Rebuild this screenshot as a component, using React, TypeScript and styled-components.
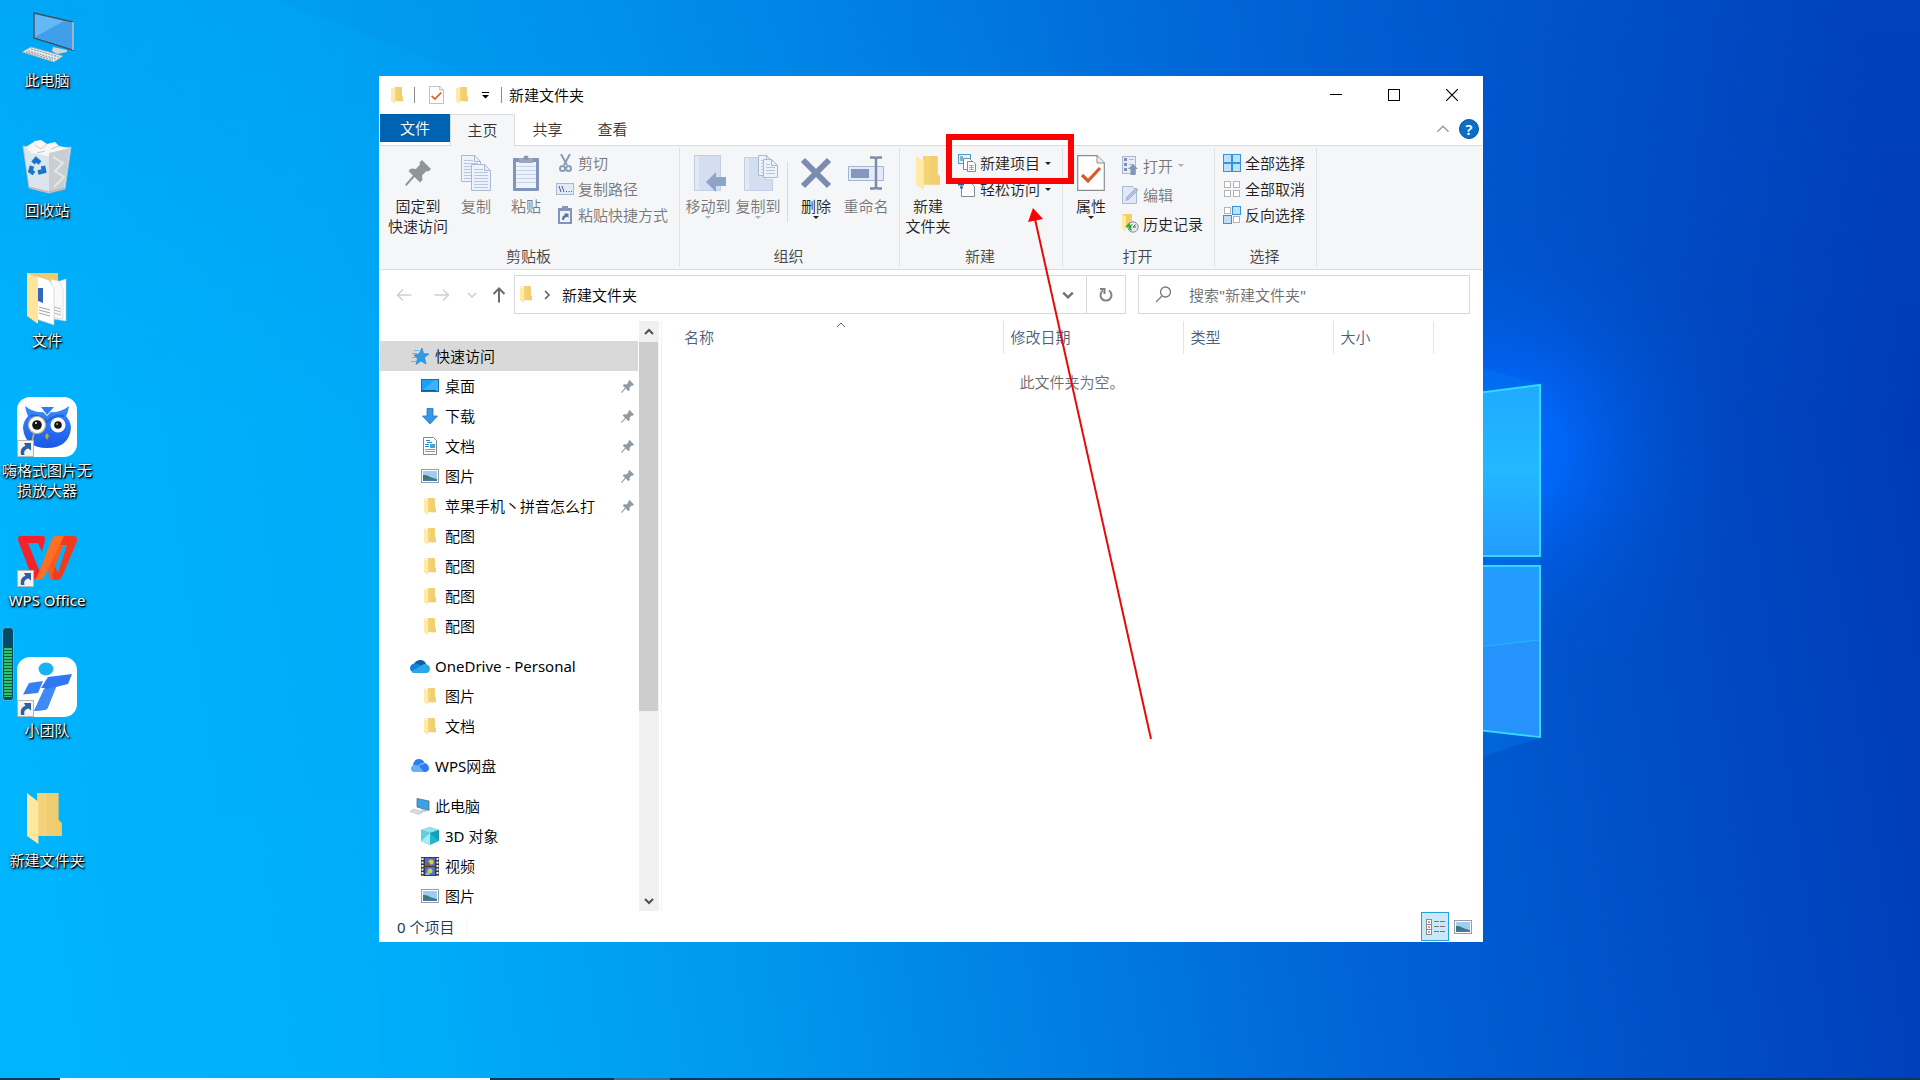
import React from "react";
import styled, { createGlobalStyle, css } from "styled-components";

const GlobalStyle = createGlobalStyle`
  *, *::before, *::after { box-sizing: border-box; }
  html, body { margin: 0; padding: 0; }
  body, button, input {
    font-family: "Noto Sans", "Noto Sans CJK SC DemiLight", "Noto Sans CJK SC", sans-serif;
    font-size: 15px;
    font-weight: 400;
    line-height: 20px;
  }
  button { margin: 0; padding: 0; border: 0; background: none; color: inherit; cursor: default; }
  svg { display: block; flex: none; }
`;

/* ---------- desktop ---------- */

const Desktop = styled.div`
  position: relative;
  display: flex;
  flex-direction: column;
  min-height: 100vh;
  overflow: hidden;
  background: #0078dc;
`;

const WallpaperSvg = styled.svg`
  position: absolute;
  inset: 0;
  width: 100%;
  height: 100%;
`;

const Workspace = styled.main`
  position: relative;
  display: flex;
  flex: 1;
`;

const IconColumn = styled.ul`
  display: flex;
  flex-direction: column;
  flex: none;
  width: 94px;
  margin: 0;
  padding: 7px 0 0;
  list-style: none;
`;

const DesktopItem = styled.li`
  height: 130px;
`;

const DesktopButton = styled.button`
  display: flex;
  flex-direction: column;
  align-items: center;
  gap: 3px;
  width: 100%;
  color: #fff;
  text-align: center;
  text-shadow: 1px 1px 1px #000, 1px 1px 2px #000, 0 1px 3px rgba(0, 0, 0, 0.8);
`;

const Battery = styled.div`
  position: absolute;
  left: 2px;
  top: 627px;
  width: 12px;
  height: 74px;
  padding: 20px 1px 3px;
  border: 1px solid #48b8e0;
  border-radius: 4px;
  background: #064a68;
`;

const BatteryCells = styled.div`
  height: 100%;
  background: repeating-linear-gradient(#2fc46a 0 2px, #07603c 2px 3px);
`;

const Taskbar = styled.footer`
  position: relative;
  display: flex;
  height: 2px;
  background: #0b3a52;
`;

const TaskbarPart = styled.div<{ $width: number; $color?: string }>`
  width: ${(p) => p.$width}px;
  background: ${(p) => p.$color ?? "transparent"};
`;

/* ---------- window ---------- */

const Window = styled.section`
  position: relative;
  display: flex;
  flex-direction: column;
  flex: 1;
  min-width: 960px;
  margin: 76px 437px 136px 285px;
  padding: 0 1px;
  background: #fff;
  color: #1a1a1a;
`;

const TitleBar = styled.header`
  display: flex;
  align-items: center;
  height: 38px;
  padding: 0 1px 0 11px;
  color: #000;
`;

const QuickButton = styled.button`
  display: flex;
  justify-content: center;
  width: 25px;
`;

const TitleIcon = styled.span`
  display: flex;
`;

const TitleRule = styled.span<{ $before: number; $after: number }>`
  width: 1px;
  height: 16px;
  margin: 0 ${(p) => p.$after}px 0 ${(p) => p.$before}px;
  background: #8c8c8c;
`;

const WindowTitle = styled.h1`
  flex: 1;
  margin: 0;
  font-size: 15px;
  font-weight: 400;
  line-height: 20px;
`;

const CaptionButton = styled.button`
  display: flex;
  align-items: center;
  justify-content: center;
  width: 58px;
  height: 38px;
`;

const TabBar = styled.nav`
  display: flex;
  height: 31px;
`;

const FileTab = styled.button`
  width: 70px;
  height: 28px;
  background: #0063b1;
  color: #fff;
`;

const Tab = styled.button<{ $active?: boolean }>`
  width: 65px;
  height: 32px;
  padding-bottom: 2px;
  color: #333;
  ${(p) =>
    p.$active &&
    css`
      border: 1px solid #dadbdc;
      border-bottom: 0;
      background: #f5f6f7;
      z-index: 1;
    `}
`;

const TabTools = styled.div`
  display: flex;
  align-items: center;
  gap: 9px;
  margin-left: auto;
  padding: 0 3px 2px 0;
`;

const HelpButton = styled.button`
  width: 20px;
  height: 20px;
  border-radius: 50%;
  border: 1px solid #08519c;
  background: #0a6fc8;
  color: #fff;
  font-weight: 600;
  line-height: 18px;
`;

const Ribbon = styled.div`
  display: flex;
  height: 125px;
  padding: 2px 0;
  border-top: 1px solid #dadbdc;
  border-bottom: 1px solid #dadbdc;
  background: #f5f6f7;
`;

const Group = styled.section<{ $width: number }>`
  display: flex;
  flex-direction: column;
  width: ${(p) => p.$width}px;
  border-right: 1px solid #e0e1e2;
`;

const GroupBody = styled.div`
  display: flex;
  flex: 1;
  padding-left: 3px;
`;

const GroupLabel = styled.h2`
  margin: 0;
  padding-right: 2px;
  color: #444;
  font-size: 15px;
  font-weight: 400;
  line-height: 22px;
  text-align: center;
`;

const GroupRule = styled.span`
  width: 1px;
  height: 60px;
  margin: 14px 3px 0 4px;
  background: #dadbdc;
`;

const BigButtonRoot = styled.button<{ $wide?: boolean }>`
  display: flex;
  flex-direction: column;
  align-items: center;
  width: ${(p) => (p.$wide ? 68 : 50)}px;
  padding: 7px 0 0 ${(p) => (p.$wide ? 2 : 0)}px;
  white-space: nowrap;
  color: #222;
  &:disabled { color: #777; }
`;

const BigIcon = styled.span`
  display: flex;
  align-items: center;
  justify-content: center;
  height: 36px;
  margin-bottom: 5px;
`;

const SmallList = styled.div<{ $loose?: boolean }>`
  display: grid;
  grid-auto-rows: ${(p) => (p.$loose ? 29 : 26)}px;
  align-content: start;
  margin-left: 4px;
  padding-top: ${(p) => (p.$loose ? 3 : 2)}px;
`;

const SmallButton = styled.button`
  display: flex;
  align-items: center;
  gap: 3px;
  white-space: nowrap;
  color: #222;
  &:disabled { color: #777; }
`;

const SmallIcon = styled.span`
  display: flex;
  justify-content: center;
  width: 20px;
`;

const ArrowRoot = styled.span<{ $muted?: boolean; $side?: boolean }>`
  width: 0;
  height: 0;
  margin-left: ${(p) => (p.$side ? 2 : 0)}px;
  border: 3px solid transparent;
  border-top-color: ${(p) => (p.$muted ? "#b0b0b0" : "#222")};
  border-bottom: 0;
`;

/* ---------- address row ---------- */

const AddressRow = styled.div`
  display: flex;
  align-items: center;
  padding: 5px 12px 7px 4px;
`;

const NavButton = styled.button<{ $width: number }>`
  display: flex;
  align-items: center;
  justify-content: center;
  width: ${(p) => p.$width}px;
  height: 38px;
`;

const AddressBox = styled.div`
  display: flex;
  align-items: center;
  flex: 1;
  height: 39px;
  padding-left: 5px;
  border: 1px solid #d9d9d9;
`;

const Crumb = styled.button`
  flex: 1;
  color: #000;
  text-align: left;
`;

const CrumbArrow = styled.span`
  display: flex;
  justify-content: center;
  width: 30px;
`;

const RefreshButton = styled.button`
  display: flex;
  align-items: center;
  justify-content: center;
  width: 39px;
  height: 37px;
  border-left: 1px solid #d9d9d9;
`;

const SearchBox = styled.label`
  display: flex;
  align-items: center;
  gap: 17px;
  width: 332px;
  height: 39px;
  margin-left: 12px;
  padding-left: 16px;
  border: 1px solid #d9d9d9;
`;

const SearchInput = styled.input`
  flex: 1;
  min-width: 0;
  padding: 0;
  border: 0;
  outline: 0;
  background: none;
  &::placeholder { color: #6d6d6d; opacity: 1; }
`;

/* ---------- panes ---------- */

const Panes = styled.div`
  display: flex;
  flex: 1;
`;

const Sidebar = styled.nav`
  display: flex;
  width: 282px;
  border-right: 1px solid #f2f2f2;
`;

const Tree = styled.div`
  display: flex;
  flex-direction: column;
  flex: 1;
  gap: 10px;
  padding-top: 20px;
  margin-right: 1px;
`;

const TreeSection = styled.div`
  display: flex;
  flex-direction: column;
`;

const TreeRow = styled.button<{ $child?: boolean; $selected?: boolean }>`
  display: flex;
  align-items: center;
  gap: 5px;
  height: 30px;
  padding: 0 4px 0 ${(p) => (p.$child ? 40 : 30)}px;
  background: ${(p) => (p.$selected ? "#d9d9d9" : "transparent")};
  color: #000;
  text-align: left;
`;

const TreeIcon = styled.span`
  display: flex;
  align-items: center;
  justify-content: center;
  width: 20px;
`;

const TreeLabel = styled.span`
  flex: 1;
  white-space: nowrap;
`;

const ScrollTrack = styled.div`
  display: flex;
  flex-direction: column;
  width: 20px;
  margin-right: 2px;
  background: #f0f0f0;
`;

const ScrollButton = styled.button`
  display: flex;
  align-items: center;
  justify-content: center;
  width: 19px;
  height: 21px;
`;

const ScrollSlot = styled.div`
  flex: 1;
`;

const ScrollThumb = styled.div`
  width: 19px;
  height: 67.4%;
  background: #cdcdcd;
`;

const FilePane = styled.div`
  position: relative;
  flex: 1;
`;

const FileTable = styled.table`
  width: 100%;
  border-collapse: collapse;
  table-layout: fixed;
`;

const HeadCell = styled.th<{ $width?: number; $inset?: number }>`
  width: ${(p) => (p.$width ? `${p.$width}px` : "auto")};
  height: 33px;
  padding: 0 0 2px ${(p) => p.$inset ?? 7}px;
  border-right: 1px solid #e5e5e5;
  color: #4c607a;
  font-weight: 400;
  text-align: left;
  &:last-child { border-right: 0; }
`;

const SortMark = styled.svg`
  position: absolute;
  left: 174px;
  top: 1px;
`;

const EmptyCell = styled.td`
  padding: 18px 0 0;
  color: #6d6d6d;
  text-align: center;
`;

const StatusBar = styled.footer`
  display: flex;
  align-items: center;
  height: 31px;
  padding: 0 5px 0 17px;
  color: #1e395b;
`;

const StatusText = styled.span`
  padding-right: 12px;
  border-right: 1px solid #f6f6f6;
`;

const ViewButtons = styled.div`
  display: flex;
  margin-left: auto;
`;

const ViewButton = styled.button<{ $active?: boolean }>`
  display: flex;
  align-items: center;
  justify-content: center;
  width: 28px;
  height: 29px;
  border: 1px solid ${(p) => (p.$active ? "#26a0da" : "transparent")};
  background: ${(p) => (p.$active ? "#cbe8f6" : "transparent")};
`;

/* ---------- annotation ---------- */

const Highlight = styled.div`
  position: absolute;
  left: 567px;
  top: 58px;
  width: 128px;
  height: 50px;
  border: 6px solid #f00;
  pointer-events: none;
`;

const Pointer = styled.svg`
  position: absolute;
  left: 640px;
  top: 130px;
  pointer-events: none;
`;

/* ---------- icons ---------- */

const Folder = ({ w = 12, h = 17 }: { w?: number; h?: number }) => (
  <svg width={w} height={h} viewBox="0 0 104 152" preserveAspectRatio="none">
    <path d="M0 0H94V80L104 90V128H30V0z" fill="#f5d478" />
    <path d="M60 0H94V80L104 90V128H60z" fill="#efc964" opacity=".5" />
    <path d="M0 0L34 26V152L0 128z" fill="#ffeaa6" />
  </svg>
);

const Pin = ({ size, color = "#8f9aa3" }: { size: number; color?: string }) => (
  <svg width={size} height={size} viewBox="0 0 26 26" fill={color}>
    <path d="M17 0L26 9L23.500 11.500L21.500 11L17 15.500L17.500 20L15 22.500L9.500 17L1.500 26L0 24.500L8 15.500L3.500 11L6 8.500L11 9L15 4.500L14.500 2.500z" />
  </svg>
);

const Sheet = ({ x, y, w, h }: { x: number; y: number; w: number; h: number }) => (
  <g>
    <path d={`M${x + 0.5} ${y + 0.5}h${w - 7}l6 6v${h - 7}h-${w - 1}z`} fill="#eef3fb" stroke="#a9b8d3" />
    <path d={`M${x + w - 6.5} ${y + 0.5}v6h6`} fill="none" stroke="#a9b8d3" />
    {[5, 8, 11, 14, 17, 20, 23].filter((d) => d < h - 2).map((d) => (
      <path key={d} d={`M${x + 3} ${y + d + 0.5}h${d < 8 ? w - 11 : w - 6}`} stroke="#b9c6de" />
    ))}
  </g>
);

const CopyIcon = () => (
  <svg width="31" height="36">
    <Sheet x={0} y={0} w={20} h={27} />
    <Sheet x={10} y={9} w={20} h={27} />
  </svg>
);

const PasteIcon = () => (
  <svg width="27" height="36">
    <rect x="0" y="3" width="26" height="33" rx="1" fill="#8194b9" />
    <rect x="3" y="7" width="20" height="26" fill="#edf2fb" />
    <path d="M3 11.500h20M3 15.500h20M3 19.500h20M3 23.500h20M3 27.500h20" stroke="#c6d2e8" />
    <rect x="6" y="3" width="14" height="5" fill="#9aa7bf" />
    <circle cx="13" cy="3" r="2.500" fill="#8a97b0" />
  </svg>
);

const CutIcon = () => (
  <svg width="13" height="19" fill="none" stroke="#8b9bb8">
    <path d="M2 0L8 11M11 0L5 11" strokeWidth="2" />
    <circle cx="3.500" cy="14.500" r="2.500" strokeWidth="2" />
    <circle cx="9.500" cy="14.500" r="2.500" strokeWidth="2" />
  </svg>
);

const PathIcon = () => (
  <svg width="18" height="12">
    <rect x=".5" y=".5" width="17" height="11" fill="#e3eaf7" stroke="#a9b8d3" />
    <path d="M3 3l2 6M6 3l2 6" stroke="#4a5c7c" />
    <path d="M10 8.500h1M12.500 8.500h1M15 8.500h1" stroke="#4a5c7c" />
  </svg>
);

const PasteLinkIcon = () => (
  <svg width="14" height="18">
    <rect x="0" y="2" width="14" height="16" fill="#8194b9" />
    <rect x="2" y="5" width="10" height="11" fill="#edf2fb" />
    <rect x="4" y="0" width="6" height="5" fill="#8a97b0" />
    <path d="M4 14C4 11 5 9.500 7 9L6 7.500H10.500V12L9.300 10.800C7 11.500 6 12.500 6 14z" fill="#5b73a3" />
  </svg>
);

const MoveIcon = () => (
  <svg width="36" height="37">
    <rect x="4.500" y=".5" width="26" height="35" fill="#d3dff1" stroke="#c0cfe6" />
    <rect x="5" y="1" width="4" height="34" fill="#e1e9f6" />
    <path d="M16 27L26 17V22H36V31H26V37z" fill="#8fa3c4" />
  </svg>
);

const CopyToIcon = () => (
  <svg width="40" height="37">
    <path d="M6.500 2.500h21v22h7v11H6.500z" fill="#d3dff1" stroke="#c0cfe6" />
    <rect x="7" y="3" width="4" height="32" fill="#e1e9f6" />
    <Sheet x={20} y={0} w={15} h={21} />
    <Sheet x={25} y={4} w={15} h={19} />
  </svg>
);

const DeleteIcon = () => (
  <svg width="32" height="32" stroke="#7b8cb0" strokeWidth="6">
    <path d="M3 3L29 29M29 3L3 29" />
  </svg>
);

const RenameIcon = () => (
  <svg width="36" height="36">
    <rect x=".5" y="11.500" width="35" height="14" fill="#e3ebf8" stroke="#a5b6d3" />
    <rect x="3" y="14" width="18" height="9" fill="#8498be" />
    <path d="M22 2.500H26Q28 2.500 28 5V31Q28 33.500 26 33.500H22M34 2.500H30Q28 2.500 28 5M28 31Q28 33.500 30 33.500H34" fill="none" stroke="#7f8ba3" strokeWidth="2.500" />
  </svg>
);

const NewItemIcon = () => (
  <svg width="18" height="18">
    <rect x=".5" y=".5" width="12" height="9" fill="#dff1fc" stroke="#4d9bc4" />
    <rect x="2" y="2" width="3" height="5" fill="#7fb3cf" />
    <path d="M5.500 4.500h6l2 2v9h-8z" fill="#fff" stroke="#7f8a94" />
    <path d="M9.500 7.500h5.500l2.500 2.500v7.500h-8z" fill="#fff" stroke="#7f8a94" />
    <path d="M11 11.500h5M11 13.500h5M11 15.500h5" stroke="#d9a2ae" />
    <path d="M13.500 11v5" stroke="#6aa5d8" />
  </svg>
);

const EasyAccessIcon = () => (
  <svg width="18" height="18">
    <path d="M3.500 2.500h9l4 4v10h-13z" fill="#fff" stroke="#7f8a94" />
    <path d="M0 4.500h6M2 7.500h3" stroke="#2e62a8" strokeWidth="2" />
  </svg>
);

const PropertiesIcon = ({ w = 28, h = 36 }: { w?: number; h?: number }) => (
  <svg width={w} height={h} viewBox="0 0 28 36" preserveAspectRatio="none">
    <path d="M.7 .7H20L27.300 8V35.300H.7z" fill="#fff" stroke="#8d8d8d" strokeWidth="1.200" />
    <path d="M20 .7V8H27.300" fill="#eee" stroke="#8d8d8d" />
    <path d="M5 20L11 26L23 13" fill="none" stroke="#de5a20" strokeWidth="3.200" />
  </svg>
);

const OpenIcon = () => (
  <svg width="16" height="19">
    <rect x=".5" y=".5" width="13" height="17" fill="#e6edf8" stroke="#a9b8d3" />
    <path d="M2 2h3v3H2zM2 7h3v3H2zM2 12h3v3H2z" fill="#7d8fb0" />
    <path d="M7 3.500h5M7 8.500h5" stroke="#a9b8d3" />
    <path d="M11 8L16 13H13.500V19H8.500V13H6z" fill="#8496b6" />
  </svg>
);

const EditIcon = () => (
  <svg width="17" height="18">
    <path d="M.5 .5h10l4 4v13H.5z" fill="#dfe8f6" stroke="#a9b8d3" />
    <path d="M4 14.500L5 11L14 2L16 4L7 13z" fill="#b5c3dc" stroke="#8fa1c1" strokeWidth=".7" />
  </svg>
);

const HistoryIcon = () => (
  <svg width="18" height="19">
    <path d="M1 0H11V14H5V3z" fill="#f2cf6e" />
    <path d="M1 0L5 3V18L1 15z" fill="#ffe9a3" />
    <circle cx="12" cy="13" r="5.200" fill="#e6e8ea" stroke="#8a9096" />
    <path d="M12 13L14.500 10.500M12 13H15" fill="none" stroke="#555" />
    <path d="M4 13L8.500 8.500L9 11Q11 10.500 12 10Q9 13 11 16.500Q8 17 7.500 13z" fill="#2fae3a" />
  </svg>
);

const SelectIcon = ({ mode }: { mode: "all" | "none" | "invert" }) => {
  const on = mode === "all" ? [0, 1, 2, 3] : mode === "invert" ? [1, 2] : [];
  return (
    <svg width="18" height="18">
      {[0, 1, 2, 3].map((i) => {
        const lit = on.includes(i);
        const s = lit ? 8 : 6;
        const x = i % 2 ? (lit ? 9.5 : 10.5) : lit ? 0.5 : 1.5;
        const y = i > 1 ? (lit ? 9.5 : 10.5) : lit ? 0.5 : 1.5;
        return <rect key={i} x={x} y={y} width={s} height={s} fill={lit ? "#bfe0fb" : "#fff"} stroke={lit ? "#3394dd" : "#b3b3b3"} />;
      })}
    </svg>
  );
};

const Chevron = ({ dir, color, w = 10, thick = 2 }: { dir: "up" | "down" | "right"; color: string; w?: number; thick?: number }) => {
  const turn = { down: 0, up: 180, right: 270 }[dir];
  return (
    <svg width={w} height={w} viewBox="0 0 10 10" fill="none" stroke={color} strokeWidth={thick}>
      <path d="M1 3L5 7L9 3" transform={`rotate(${turn} 5 5)`} />
    </svg>
  );
};

const LongArrow = ({ dir, color }: { dir: "left" | "right" | "up"; color: string }) => {
  const turn = { left: 0, right: 180, up: 90 }[dir];
  return (
    <svg width="16" height="16" viewBox="0 0 16 16" fill="none" stroke={color} strokeWidth={dir === "up" ? 2 : 1.5}>
      <path d="M7 2.500L1.500 8L7 13.500M1.500 8H15.500" transform={`rotate(${turn} 8 8)`} />
    </svg>
  );
};

const RefreshIcon = () => (
  <svg width="16" height="16" fill="none" stroke="#808080" strokeWidth="2">
    <path d="M11 3.500A5.500 5.500 0 1 1 5 3.500" />
    <path d="M2 2H6.500V7" />
  </svg>
);

const SearchIcon = () => (
  <svg width="17" height="17" fill="none" stroke="#7a7a7a" strokeWidth="1.300">
    <circle cx="10.500" cy="6" r="5" />
    <path d="M7 10L1 16" />
  </svg>
);

const StarIcon = () => (
  <svg width="18" height="17">
    <path d="M11 0L12.500 5.500L18 6L13.500 9.500L15 16L10 13L5 16.500L6.500 10.500L3 7L8 6z" fill="#2e9be6" stroke="#1f7fc6" strokeWidth=".6" />
    <path d="M3 2.500h5M1 5.500h5M1 9.500h4M0 13.500h5" stroke="#6cb6ea" />
  </svg>
);

const DesktopIcon = () => (
  <svg width="18" height="14">
    <rect x=".5" y=".5" width="17" height="12" fill="#18a0fb" stroke="#1170b8" />
    <path d="M1 12L13 1H17V12z" fill="#3cb2ff" />
    <path d="M1 11.500h14" stroke="#0b5a98" />
  </svg>
);

const DownloadIcon = () => (
  <svg width="16" height="17">
    <path d="M5 .5H11V8H15.500L8 16L.5 8H5z" fill="#3a96e4" stroke="#2273bb" strokeWidth=".8" />
  </svg>
);

const DocumentIcon = () => (
  <svg width="16" height="18">
    <path d="M1.500 .5h10l3 3v14h-13z" fill="#fff" stroke="#83888d" />
    <path d="M4 3.500h4M5 5.500h5M3 7.500h4M3 9.500h4" stroke="#1f87c7" />
    <rect x="8" y="7" width="5" height="4" fill="#4aa3d4" />
    <path d="M3 12.500h10M3 14.500h10" stroke="#8f9aa3" />
  </svg>
);

const PictureIcon = () => (
  <svg width="18" height="14">
    <rect x=".5" y=".5" width="17" height="13" fill="#fff" stroke="#9a9da0" />
    <rect x="2" y="2" width="14" height="10" fill="#9fccf2" />
    <path d="M2 6Q6 5.500 9 8L15 10H2z" fill="#3f7668" />
    <path d="M2 10Q9 9 16 10V12H2z" fill="#3f78ae" />
  </svg>
);

const OneDriveIcon = () => (
  <svg width="20" height="13">
    <path d="M4 4Q6 0 10.500 0Q14.500 0 16 4L12 8L4 5z" fill="#0f5ea9" />
    <path d="M4.500 3.500Q7.500 3 10 5L14 8L3 12Q0 11 0 8Q.3 4 4.500 3.500z" fill="#1482d8" />
    <path d="M13 4.500Q15.500 3 17 4.500Q20 6 20 9Q19.500 13 16 13H4Q2 13 1.500 11.500z" fill="#28a8ea" />
  </svg>
);

const WpsCloudIcon = () => (
  <svg width="20" height="14">
    <path d="M3 6Q4 0 9 0Q13 0 14.500 4Q19 5 19 9.500Q18.500 13 15 13H8z" fill="#2b7df3" />
    <path d="M4 6Q8 5 11 9.500L14 13H4.500Q1 13 1 9.500Q1 6.500 4 6z" fill="#69aefb" />
    <path d="M8 7.500Q10 4.500 14 4.500" fill="none" stroke="#9fd0ff" />
  </svg>
);

const MiniPcIcon = () => (
  <svg width="20" height="17">
    <path d="M7 .5L19 3V12.500L7 9z" fill="#37a3ee" stroke="#5f6b75" strokeWidth=".8" />
    <path d="M12 11L18 13L15 14L11 13z" fill="#bfc5ca" />
    <path d="M4 11L13 14L9 16.500L0 13.500z" fill="#d9dcdf" stroke="#a9afb4" strokeWidth=".5" />
  </svg>
);

const CubeIcon = () => (
  <svg width="18" height="18">
    <path d="M9 0L18 3V14L9 18L0 14V3z" fill="#26b5ce" />
    <path d="M0 3L9 0L18 3L9 6z" fill="#8fe4ee" />
    <path d="M0 3L9 6V18L0 14z" fill="#5fd0de" />
    <path d="M9 6L0 14L9 18z" fill="#a5edf2" />
    <path d="M9 6L18 3V14z" fill="#149cbd" />
  </svg>
);

const FilmIcon = () => (
  <svg width="18" height="19">
    <rect width="18" height="19" fill="#3a3a3a" />
    <rect x="4" y="1" width="10" height="8" fill="#4b6fd0" />
    <rect x="4" y="10" width="10" height="8" fill="#4b6fd0" />
    <circle cx="10" cy="5" r="2.500" fill="#e5c933" />
    <path d="M4 9L8 5L10 9z" fill="#b0473f" />
    <circle cx="9" cy="14" r="2.500" fill="#e5c933" />
    <path d="M4 18L7 14L9 18z" fill="#7ec3e8" />
    <path d="M1.500 1V19M16.500 1V19" stroke="#f4f4f4" strokeWidth="2" strokeDasharray="2 1.500" />
  </svg>
);

const DetailsIcon = () => (
  <svg width="19" height="16">
    <rect x=".5" y=".5" width="5" height="15" fill="#fff" stroke="#8a8a8a" />
    <path d="M0 5.500h6M0 10.500h6" stroke="#8a8a8a" />
    <path d="M2.500 3h1M2.500 8h1M2.500 13h1" stroke="#a33" strokeWidth="2" />
    <path d="M8 2.500h5M14 2.500h5M8 7.500h5M14 7.500h5M8 12.500h5M14 12.500h5" stroke="#777" />
  </svg>
);

const Shortcut = () => (
  <g>
    <rect x=".5" y="43.500" width="16" height="16" fill="#f4f4f4" stroke="#b5b5b5" />
    <path d="M4 58C3 53 5 49.500 8.500 49L7 46H14V53.500L11.500 51.500C8.500 52 6.500 54 7.500 58z" fill="#2f5f9f" />
  </g>
);

const Big = ({ children }: { children: React.ReactNode }) => (
  <svg width="60" height="60" viewBox="0 0 60 60">
    {children}
  </svg>
);

const PcArt = () => (
  <Big>
    <path d="M36 40L50 43V45L40 47L35 44z" fill="#cfd6db" />
    <path d="M17 6L56 15V43L17 31z" fill="#63b9f5" stroke="#3c4f60" strokeWidth="1.400" />
    <path d="M18 30L47 14L55 16V42z" fill="#3f9fea" />
    <path d="M56 15V43" stroke="#c3cdd4" strokeWidth="1.500" />
    <path d="M14 40L46 49L37 55L5 45z" fill="#e7ebee" stroke="#9aa6ae" strokeWidth=".8" />
    <path d="M14 42L42 50M11 44L39 52M9 45L36 53" stroke="#8f9ba4" strokeWidth="1.100" strokeDasharray="2 1" />
  </Big>
);

const BinArt = () => (
  <Big>
    <path d="M6 9L30 14L54 10L48 52L32 56L12 51z" fill="#dce5ec" stroke="#b5c4cf" strokeWidth=".8" />
    <path d="M9 10L18 4L24 3L30 7L38 5L42 9L52 11L46 17L32 19L14 16z" fill="#f7f7f7" />
    <path d="M18 8L24 12L30 7M34 12L42 9M28 14L20 16" stroke="#c5c8cb" fill="none" />
    <path d="M32 16L53 11L47 51L32 55z" fill="#c9ced3" />
    <path d="M36 20L46 26L38 34L47 40L37 50" stroke="#e4e7ea" strokeWidth="2" fill="none" />
    <path d="M12 50L32 55L48 51" stroke="#d0a79a" fill="none" />
    <g fill="none" stroke="#1676c8" strokeWidth="4.500">
      <path d="M16 26L19 22.500L23 26" />
      <path d="M26 29L27 34L21 35.500" />
      <path d="M17 36.500L13.500 34L15 29" />
    </g>
  </Big>
);

const FilesArt = () => (
  <Big>
    <path d="M10 6H41V40H20z" fill="#efca66" />
    <path d="M37 16L49 12V54L37 52z" fill="#fff" stroke="#d0d0d0" strokeWidth=".6" />
    <path d="M34 12L42 14L46 22V52L34 50z" fill="#fafafa" stroke="#ccc" strokeWidth=".6" />
    <path d="M37 40L44 42M37 43L44 45M37 46L44 48" stroke="#999" strokeWidth=".7" />
    <path d="M19 9L32 13L37 21V58L19 52z" fill="#fff" stroke="#c6c6c6" strokeWidth=".6" />
    <path d="M21 21L26 21V36L21 34z" fill="#3767bd" />
    <path d="M22 43L33 46M22 46L33 49M22 40L33 43" stroke="#888" strokeWidth=".8" />
    <path d="M10 6L21 11V57L10 49z" fill="#ffe49a" />
  </Big>
);

const OwlArt = () => (
  <Big>
    <defs>
      <linearGradient id="owl" x1="0" y1="0" x2="0" y2="1">
        <stop offset="0" stopColor="#3b8cf8" />
        <stop offset="1" stopColor="#1a58e8" />
      </linearGradient>
    </defs>
    <rect width="60" height="60" rx="13" fill="#fff" />
    <path d="M8 9Q17 16 26 15L30 19L34 15Q43 16 52 9Q51 16 49 19Q54 25 54 31Q52 51 30 51Q8 51 6 31Q6 25 11 19Q9 15 8 9z" fill="url(#owl)" />
    <path d="M24 10H37L30 18z" fill="#2f7df4" />
    <path d="M13 19Q23 17 30 25Q37 17 47 19" fill="none" stroke="#1f63e2" strokeWidth="2" />
    <circle cx="20" cy="28" r="8.500" fill="#fff" stroke="#c8b987" strokeWidth="1.200" />
    <circle cx="41" cy="28" r="7.500" fill="#fff" />
    <circle cx="20" cy="28" r="4.800" fill="#151515" />
    <circle cx="41" cy="28" r="3.800" fill="#151515" />
    <circle cx="19" cy="26" r="1" fill="#fff" />
    <circle cx="40" cy="27" r=".8" fill="#fff" />
    <path d="M30 36L32 39L30 43L28 39z" fill="#c3a44d" />
    <path d="M17 36L15 45" stroke="#c8b46a" strokeWidth="1.500" />
    <Shortcut />
  </Big>
);

const WpsArt = () => (
  <Big>
    <path d="M4 9H25Q29 9 28 13L25 25L21 16H11L25 50Q23 53 19 53Q16 53 15 50L1 13Q0 9 4 9z" fill="#f5222d" />
    <path d="M43 9H56Q61 9 60 14L45 50Q43 53 40 53H37Q33 53 32 49L36 35L41 46L50 18H39z" fill="#f23a1e" />
    <path d="M46 19L36 45Q34 49 37 53Q33 53 32 49L31 41L40 18z" fill="#fb5a1d" />
    <path d="M39 9H47L27 50Q25 53 22 53H17Q20 51 21 47L35 12Q36 9 39 9z" fill="#fd6f22" />
    <Shortcut />
  </Big>
);

const TeamArt = () => (
  <Big>
    <rect width="60" height="60" rx="13" fill="#fff" />
    <ellipse cx="29" cy="12" rx="7.500" ry="6.500" fill="#19b3f2" />
    <path d="M12 26L26 24L21 36L6 37.500z" fill="#3580f5" />
    <path d="M31 20L55 17L51 27L39 30L31 50Q30 53 27 53L17 54L28 31L24 31z" fill="#2f78f2" />
    <path d="M39 30L31 50Q30 53 27 53L17 54L27 32z" fill="#4089f8" />
    <Shortcut />
  </Big>
);

const FolderArt = () => (
  <Big>
    <g transform="translate(10 6) scale(.335)">
      <path d="M0 0H94V80L104 90V128H30V0z" fill="#f3d27a" />
      <path d="M60 0H94V80L104 90V128H60z" fill="#eac766" opacity=".5" />
      <path d="M0 0L34 26V152L0 128z" fill="#ffe7a0" />
    </g>
  </Big>
);

const Wallpaper = () => (
  <WallpaperSvg viewBox="0 0 1920 1080" preserveAspectRatio="none" aria-hidden="true">
    <defs>
      <linearGradient id="base" gradientUnits="userSpaceOnUse" x1="0" y1="680" x2="1920" y2="400">
        <stop offset="0" stopColor="#00b4fd" />
        <stop offset=".2" stopColor="#00abf8" />
        <stop offset=".36" stopColor="#0098ef" />
        <stop offset=".5" stopColor="#0081e3" />
        <stop offset=".67" stopColor="#0064d6" />
        <stop offset=".82" stopColor="#0050c8" />
        <stop offset="1" stopColor="#003ab6" />
      </linearGradient>
      <radialGradient id="glow" gradientUnits="userSpaceOnUse" cx="1500" cy="450" r="250">
        <stop offset="0" stopColor="#006cff" />
        <stop offset=".25" stopColor="#0068fe" stopOpacity=".85" />
        <stop offset=".5" stopColor="#0060f0" stopOpacity=".45" />
        <stop offset=".75" stopColor="#0058e0" stopOpacity=".15" />
        <stop offset="1" stopColor="#0055dc" stopOpacity="0" />
      </radialGradient>
      <linearGradient id="topShade" x1="0" y1="0" x2="0" y2="1">
        <stop offset="0" stopColor="#0070dc" stopOpacity=".15" />
        <stop offset=".4" stopColor="#0070dc" stopOpacity="0" />
      </linearGradient>
      <linearGradient id="pane" x1="0" y1="0" x2="0" y2="1">
        <stop offset="0" stopColor="#20aaff" />
        <stop offset=".5" stopColor="#22b8ff" />
        <stop offset="1" stopColor="#229cff" />
      </linearGradient>
    </defs>
    <rect width="1920" height="1080" fill="url(#base)" />
    <rect width="1920" height="1080" fill="url(#topShade)" />
    <path d="M275 0L500 86H1100L900 0z" fill="#0080e8" opacity=".12" />
    <path d="M0 838L380 798V1080H0z" fill="#00b8ff" opacity=".15" />
    <circle cx="1500" cy="450" r="250" fill="url(#glow)" />
    <path d="M1380 340L1540 384V738L1380 790z" fill="#0084f0" opacity=".3" />
    <g stroke="#2fdcff" strokeWidth="2">
      <path d="M1400 403L1540 385V556H1400z" fill="url(#pane)" />
      <path d="M1400 566H1540V737L1400 721z" fill="#229cff" />
    </g>
    <path d="M1400 656L1539 640V736L1400 720z" fill="#2690fa" opacity=".7" />
    <path d="M1400 656L1539 640" stroke="#2fb4ff" />
  </WallpaperSvg>
);

/* ---------- composed parts ---------- */

type BigProps = {
  icon: React.ReactNode;
  lines: string[];
  wide?: boolean;
  disabled?: boolean;
  menu?: boolean;
};

const BigButton = ({ icon, lines, wide, disabled, menu }: BigProps) => (
  <BigButtonRoot $wide={wide} disabled={disabled}>
    <BigIcon>{icon}</BigIcon>
    {lines.map((l) => (
      <span key={l}>{l}</span>
    ))}
    {menu && <ArrowRoot $muted={disabled} />}
  </BigButtonRoot>
);

type SmallProps = { icon: React.ReactNode; label: string; disabled?: boolean; menu?: boolean };

const Small = ({ icon, label, disabled, menu }: SmallProps) => (
  <SmallButton disabled={disabled}>
    <SmallIcon>{icon}</SmallIcon>
    {label}
    {menu && <ArrowRoot $muted={disabled} $side />}
  </SmallButton>
);

const desktopItems: { label: string; art: React.ReactNode }[] = [
  { label: "此电脑", art: <PcArt /> },
  { label: "回收站", art: <BinArt /> },
  { label: "文件", art: <FilesArt /> },
  { label: "嗨格式图片无损放大器", art: <OwlArt /> },
  { label: "WPS Office", art: <WpsArt /> },
  { label: "小团队", art: <TeamArt /> },
  { label: "新建文件夹", art: <FolderArt /> },
];

type Node = { label: string; icon: React.ReactNode; pinned?: boolean };

const tree: { root: Node; selected?: boolean; children: Node[] }[] = [
  {
    root: { label: "快速访问", icon: <StarIcon /> },
    selected: true,
    children: [
      { label: "桌面", icon: <DesktopIcon />, pinned: true },
      { label: "下载", icon: <DownloadIcon />, pinned: true },
      { label: "文档", icon: <DocumentIcon />, pinned: true },
      { label: "图片", icon: <PictureIcon />, pinned: true },
      { label: "苹果手机丶拼音怎么打", icon: <Folder />, pinned: true },
      { label: "配图", icon: <Folder /> },
      { label: "配图", icon: <Folder /> },
      { label: "配图", icon: <Folder /> },
      { label: "配图", icon: <Folder /> },
    ],
  },
  {
    root: { label: "OneDrive - Personal", icon: <OneDriveIcon /> },
    children: [
      { label: "图片", icon: <Folder /> },
      { label: "文档", icon: <Folder /> },
    ],
  },
  { root: { label: "WPS网盘", icon: <WpsCloudIcon /> }, children: [] },
  {
    root: { label: "此电脑", icon: <MiniPcIcon /> },
    children: [
      { label: "3D 对象", icon: <CubeIcon /> },
      { label: "视频", icon: <FilmIcon /> },
      { label: "图片", icon: <PictureIcon /> },
    ],
  },
];

const RibbonPanel = () => (
  <Ribbon>
    <Group $width={300}>
      <GroupBody>
        <BigButton wide icon={<Pin size={26} color="#8d9699" />} lines={["固定到", "快速访问"]} />
        <BigButton disabled icon={<CopyIcon />} lines={["复制"]} />
        <BigButton disabled icon={<PasteIcon />} lines={["粘贴"]} />
        <SmallList>
          <Small disabled icon={<CutIcon />} label="剪切" />
          <Small disabled icon={<PathIcon />} label="复制路径" />
          <Small disabled icon={<PasteLinkIcon />} label="粘贴快捷方式" />
        </SmallList>
      </GroupBody>
      <GroupLabel>剪贴板</GroupLabel>
    </Group>
    <Group $width={220}>
      <GroupBody>
        <BigButton disabled menu icon={<MoveIcon />} lines={["移动到"]} />
        <BigButton disabled menu icon={<CopyToIcon />} lines={["复制到"]} />
        <GroupRule />
        <BigButton menu icon={<DeleteIcon />} lines={["删除"]} />
        <BigButton disabled icon={<RenameIcon />} lines={["重命名"]} />
      </GroupBody>
      <GroupLabel>组织</GroupLabel>
    </Group>
    <Group $width={163}>
      <GroupBody>
        <BigButton icon={<Folder w={24} h={34} />} lines={["新建", "文件夹"]} />
        <SmallList>
          <Small menu icon={<NewItemIcon />} label="新建项目" />
          <Small menu icon={<EasyAccessIcon />} label="轻松访问" />
        </SmallList>
      </GroupBody>
      <GroupLabel>新建</GroupLabel>
    </Group>
    <Group $width={152}>
      <GroupBody>
        <BigButton menu icon={<PropertiesIcon />} lines={["属性"]} />
        <SmallList $loose>
          <Small disabled menu icon={<OpenIcon />} label="打开" />
          <Small disabled icon={<EditIcon />} label="编辑" />
          <Small icon={<HistoryIcon />} label="历史记录" />
        </SmallList>
      </GroupBody>
      <GroupLabel>打开</GroupLabel>
    </Group>
    <Group $width={102}>
      <GroupBody>
        <SmallList>
          <Small icon={<SelectIcon mode="all" />} label="全部选择" />
          <Small icon={<SelectIcon mode="none" />} label="全部取消" />
          <Small icon={<SelectIcon mode="invert" />} label="反向选择" />
        </SmallList>
      </GroupBody>
      <GroupLabel>选择</GroupLabel>
    </Group>
  </Ribbon>
);

const SidebarPanel = () => (
  <Sidebar aria-label="导航窗格">
    <Tree>
      {tree.map((s) => (
        <TreeSection key={s.root.label}>
          <TreeRow $selected={s.selected}>
            <TreeIcon>{s.root.icon}</TreeIcon>
            <TreeLabel>{s.root.label}</TreeLabel>
          </TreeRow>
          {s.children.map((c, i) => (
            <TreeRow key={i} $child>
              <TreeIcon>{c.icon}</TreeIcon>
              <TreeLabel>{c.label}</TreeLabel>
              {c.pinned && <Pin size={13} />}
            </TreeRow>
          ))}
        </TreeSection>
      ))}
    </Tree>
    <ScrollTrack>
      <ScrollButton aria-label="向上滚动">
        <Chevron dir="up" color="#505050" />
      </ScrollButton>
      <ScrollSlot>
        <ScrollThumb />
      </ScrollSlot>
      <ScrollButton aria-label="向下滚动">
        <Chevron dir="down" color="#505050" />
      </ScrollButton>
    </ScrollTrack>
  </Sidebar>
);

export default function App() {
  return (
    <Desktop>
      <GlobalStyle />
      <Wallpaper />
      <Workspace>
        <IconColumn>
          {desktopItems.map((d) => (
            <DesktopItem key={d.label}>
              <DesktopButton>
                {d.art}
                <span>{d.label}</span>
              </DesktopButton>
            </DesktopItem>
          ))}
        </IconColumn>
        <Battery>
          <BatteryCells />
        </Battery>

        <Window>
          <TitleBar>
            <TitleIcon>
              <Folder />
            </TitleIcon>
            <TitleRule $before={11} $after={9} />
            <QuickButton aria-label="属性">
              <PropertiesIcon w={15} h={18} />
            </QuickButton>
            <QuickButton aria-label="新建文件夹">
              <Folder />
            </QuickButton>
            <QuickButton aria-label="自定义快速访问工具栏">
              <svg width="10" height="7">
                <path d="M0 .5H7" stroke="#000" />
                <path d="M0 3H7L3.500 6.500z" />
              </svg>
            </QuickButton>
            <TitleRule $before={2} $after={7} />
            <WindowTitle>新建文件夹</WindowTitle>
            <CaptionButton aria-label="最小化">
              <svg width="12" height="12" stroke="#000">
                <path d="M0 5.500H12" />
              </svg>
            </CaptionButton>
            <CaptionButton aria-label="最大化">
              <svg width="12" height="12" stroke="#000" fill="none">
                <rect x=".5" y=".5" width="11" height="11" />
              </svg>
            </CaptionButton>
            <CaptionButton aria-label="关闭">
              <svg width="12" height="12" stroke="#000" strokeWidth="1.200">
                <path d="M0 0L12 12M12 0L0 12" />
              </svg>
            </CaptionButton>
          </TitleBar>

          <TabBar>
            <FileTab>文件</FileTab>
            <Tab $active>主页</Tab>
            <Tab>共享</Tab>
            <Tab>查看</Tab>
            <TabTools>
              <Chevron dir="up" color="#9a9a9a" w={14} thick={1} />
              <HelpButton aria-label="帮助">?</HelpButton>
            </TabTools>
          </TabBar>

          <RibbonPanel />

          <AddressRow>
            <NavButton $width={39} aria-label="后退">
              <LongArrow dir="left" color="#d0d0d0" />
            </NavButton>
            <NavButton $width={38} aria-label="前进">
              <LongArrow dir="right" color="#d0d0d0" />
            </NavButton>
            <NavButton $width={22} aria-label="最近位置">
              <Chevron dir="down" color="#cfcfcf" w={10} thick={1.5} />
            </NavButton>
            <NavButton $width={31} aria-label="上一级">
              <LongArrow dir="up" color="#6a6a6a" />
            </NavButton>
            <AddressBox>
              <Folder />
              <CrumbArrow>
                <Chevron dir="right" color="#5a5a5a" w={10} thick={1.5} />
              </CrumbArrow>
              <Crumb>新建文件夹</Crumb>
              <NavButton $width={36} aria-label="展开地址">
                <Chevron dir="down" color="#707070" w={12} />
              </NavButton>
              <RefreshButton aria-label="刷新">
                <RefreshIcon />
              </RefreshButton>
            </AddressBox>
            <SearchBox>
              <SearchIcon />
              <SearchInput type="text" aria-label="搜索" placeholder={'搜索"新建文件夹"'} />
            </SearchBox>
          </AddressRow>

          <Panes>
            <SidebarPanel />
            <FilePane>
              <FileTable>
                <thead>
                  <tr>
                    <HeadCell $inset={22}>名称</HeadCell>
                    <HeadCell $width={180}>修改日期</HeadCell>
                    <HeadCell $width={150}>类型</HeadCell>
                    <HeadCell $width={100}>大小</HeadCell>
                    <HeadCell $width={49} aria-hidden="true" />
                  </tr>
                </thead>
                <tbody>
                  <tr>
                    <EmptyCell colSpan={5}>此文件夹为空。</EmptyCell>
                  </tr>
                </tbody>
              </FileTable>
              <SortMark width="10" height="6" fill="none" stroke="#6a6a6a">
                <path d="M1 5L5 1L9 5" />
              </SortMark>
            </FilePane>
          </Panes>

          <StatusBar>
            <StatusText>0 个项目</StatusText>
            <ViewButtons>
              <ViewButton $active aria-label="详细信息">
                <DetailsIcon />
              </ViewButton>
              <ViewButton aria-label="大图标">
                <PictureIcon />
              </ViewButton>
            </ViewButtons>
          </StatusBar>

          <Highlight />
          <Pointer width="140" height="540">
            <path d="M16 13L132 533" stroke="#e60a0a" strokeWidth="2" />
            <path d="M14 2L24 13L9 16z" fill="#f00" />
          </Pointer>
        </Window>
      </Workspace>
      <Taskbar>
        <TaskbarPart $width={60} />
        <TaskbarPart $width={430} $color="#f4fafd" />
        <TaskbarPart $width={124} />
        <TaskbarPart $width={56} $color="#3f6f88" />
      </Taskbar>
    </Desktop>
  );
}
